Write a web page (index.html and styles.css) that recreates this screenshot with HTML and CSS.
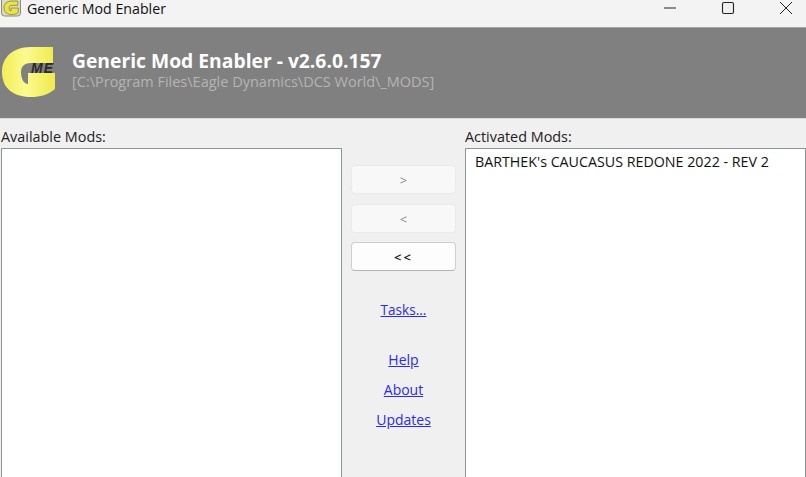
FILE: index.html
```html
<!DOCTYPE html>
<html lang="en">
<head>
<meta charset="utf-8">
<title>Generic Mod Enabler</title>
<link rel="stylesheet" href="styles.css">
</head>
<body>
<div class="window">
  <header class="titlebar">
    <svg class="app-icon" width="23" height="18" viewBox="0 0 23 18">
      <rect x="1.500" y="-6" width="19" height="22" rx="3" fill="#ddd9bd" stroke="#8a8a80"/>
      <path transform="translate(3.500 .5) scale(.27)" d="M53 2H31C12 2 2 13 2 27C2 43 13 52 31 52C40 52 48 50 55 44V28H28V39C24 39 21 34 21 27C21 21 25 18 31 18H53Z" fill="#ece63c" stroke="#55533a" stroke-width="2"/>
    </svg>
    <span class="title-text">Generic Mod Enabler</span>
    <div class="controls">
      <svg class="ctl" width="14" height="14" viewBox="0 0 14 14"><path d="M1 7H13" stroke="#222" stroke-width="1"/></svg>
      <svg class="ctl" width="14" height="14" viewBox="0 0 14 14"><rect x="1.500" y="1.500" width="11" height="11" rx="1.500" fill="#f0f0f0" stroke="#222" stroke-width="1.100"/></svg>
      <svg class="ctl" width="14" height="14" viewBox="0 0 14 14"><path d="M1 1L13 13M13 1L1 13" stroke="#222" stroke-width="1"/></svg>
    </div>
  </header>
  <section class="banner">
    <div class="logo">
      <svg width="58" height="56" viewBox="0 0 58 56">
        <defs><linearGradient id="g" x1="0" x2="1" y1="0" y2="0"><stop offset="0" stop-color="#f2ee55"/><stop offset=".45" stop-color="#fcfa90"/><stop offset="1" stop-color="#efea4c"/></linearGradient></defs>
        <path d="M53 2H31C12 2 2 13 2 27C2 43 13 52 31 52C40 52 48 50 55 44V28H28V39C24 39 21 34 21 27C21 21 25 18 31 18H53Z" fill="url(#g)"/>
      </svg>
      <span class="logo-me">ME</span>
    </div>
    <div class="banner-text">
      <div class="app-name">Generic Mod Enabler - v2.6.0.157</div>
      <div class="app-path">[C:\Program Files\Eagle Dynamics\DCS World\_MODS]</div>
    </div>
  </section>
  <main class="content">
    <div class="column left">
      <div class="label">Available Mods:</div>
      <div class="listbox"></div>
    </div>
    <div class="middle">
      <button class="btn" disabled>&gt;</button>
      <button class="btn second" disabled>&lt;</button>
      <button class="btn active">&lt;&lt;</button>
      <a class="link tasks" href="#">Tasks...</a>
      <a class="link help" href="#">Help</a>
      <a class="link" href="#">About</a>
      <a class="link" href="#">Updates</a>
    </div>
    <div class="column right">
      <div class="label">Activated Mods:</div>
      <div class="listbox"><div class="item">BARTHEK's CAUCASUS REDONE 2022 - REV 2</div></div>
    </div>
  </main>
</div>
</body>
</html>
```
FILE: styles.css
```css
* { box-sizing: border-box; }
html, body { margin: 0; height: 100%; overflow: hidden; }
body { font-family: "Open Sans", "Noto Sans", sans-serif; background: #f0f0f0; color: #1a1a1a; }
.window { width: 806px; height: 477px; display: flex; flex-direction: column; overflow: hidden; }
.titlebar { height: 28px; flex: none; background: #f3f3f3; border-bottom: 1px solid #a6a6a6; display: flex; align-items: flex-start; }
.app-icon { flex: none; margin-right: 4px; }
.title-text { font-size: 14.200px; line-height: 15px; padding-top: 1px; color: #111; }
.controls { margin-left: auto; display: flex; gap: 44px; padding: 1px 13px 0 0; }
.ctl { flex: none; }
.banner { height: 91px; flex: none; background: #808080; border-bottom: 1px solid #dcdcdc; display: flex; }
.logo { position: relative; width: 72px; padding: 17px 0 0 0; flex: none; }
.logo svg { display: block; }
.logo-me { position: absolute; left: 31px; top: 32px; font: italic 700 14px/16px "Liberation Sans", sans-serif; color: #2a2a2a; letter-spacing: 1px; }
.banner-text { padding-top: 20px; }
.app-name { font-size: 19.300px; line-height: 25px; font-weight: 700; color: #fff; }
.app-path { font-size: 14.500px; line-height: 17px; color: #b4b4b4; }
.content { flex: 1; display: flex; min-height: 0; }
.column { width: 342px; flex: none; display: flex; flex-direction: column; }
.column.left { padding-left: 1px; }
.column.right { width: 341px; }
.label { font-size: 14.400px; line-height: 18px; padding-top: 9px; height: 29px; color: #222; }
.listbox { flex: 1; background: #fff; border: 1px solid #8e949a; border-bottom: 0; }
.item { font-size: 14.250px; line-height: 18px; padding: 4px 9px; color: #111; }
.middle { flex: 1; display: flex; flex-direction: column; align-items: center; padding-top: 46px; }
.btn { width: 105px; height: 29px; flex: none; margin-bottom: 9px; border: 1px solid #eaeaea; border-radius: 4px; background: #f8f8f8; color: #8b8b8b; font: 13px/16px "Open Sans", sans-serif; padding: 0; }
.btn:first-child { margin-bottom: 10px; }
.btn.active { height: 29px; background: #fdfdfd; border-color: #cfcfcf; border-bottom-color: #b4b4b4; color: #111; font-weight: 600; letter-spacing: 2px; }
.link { font-size: 14px; line-height: 20px; height: 30px; color: #2a2af0; text-decoration: underline; }
.tasks { font-size: 13.600px; margin-top: 20px; margin-bottom: 20px; }
```
